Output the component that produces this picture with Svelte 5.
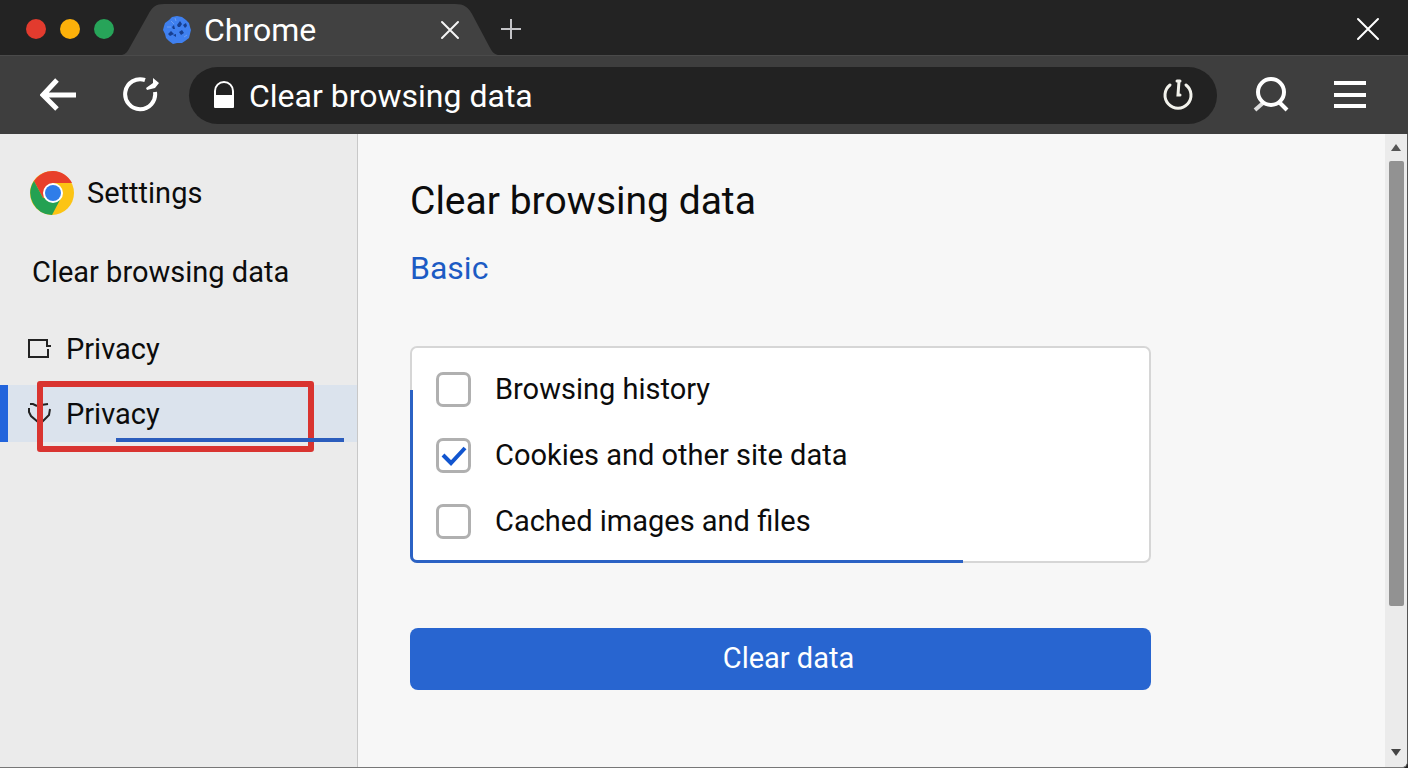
<script>
let address = "Clear browsing data";
let active = "permissions";

let navItems = [
  { id: "privacy", label: "Privacy", icon: "box" },
  { id: "permissions", label: "Privacy", icon: "shield" }
];

let options = [
  { id: "history", label: "Browsing history", checked: false },
  { id: "cookies", label: "Cookies and other site data", checked: true },
  { id: "cache", label: "Cached images and files", checked: false }
];

function clearData() {
  options = options.map(option => ({ ...option, checked: false }));
}
</script>

<div class="browser">
  <header class="titlebar">
    <div class="lights">
      <span class="light red"></span>
      <span class="light yellow"></span>
      <span class="light green"></span>
    </div>
    <div class="tab">
      <svg class="tab-shape" viewBox="0 0 376 52" preserveAspectRatio="none" aria-hidden="true">
        <path d="M0 52 C4 51 6 48 8 44 L26 12 C30 4 34 1 42 1 H333 C342 1 346 4 350 11 L367 43 C370 49 372 51 376 52 Z" fill="#414141" />
      </svg>
      <svg class="favicon" width="30" height="30" viewBox="0 0 30 30" aria-hidden="true">
        <path d="M10 2 L15 1 L20 2 L24 5 L27 8 L28 12 L29 15 L28 19 L27 23 L23 26 L20 28 L15 28 L11 29 L7 26 L4 23 L3 19 L1 15 L2 11 L3 8 L7 5 Z" fill="#3f80f0" />
        <g fill="#173f91">
          <path d="M15 10 L18 6 L20 9 L18 12 L16 12 Z M21 10 L24 8 L25 11 L23 13 Z M10 12 L12 10 L13 14 L11 14 Z" />
          <path d="M6 19 L9 16 L12 19 L8 21 Z M17 17 L20 15 L22 18 L19 20 Z M11 20 L14 19 L14 22 Z" />
        </g>
        <path d="M9 6 L12 9 M5 12 L9 12 M22 22 L25 20 M13 3 L14 6" stroke="#6c9df2" stroke-width="1" />
      </svg>
      <span class="tab-title">Chrome</span>
      <button class="icon-button" aria-label="Close tab">
        <svg width="20" height="20" viewBox="0 0 20 20"><path d="M2 2 L18 18 M18 2 L2 18" stroke="#f4f4f4" stroke-width="2" stroke-linecap="round" /></svg>
      </button>
    </div>
    <button class="icon-button" aria-label="New tab">
      <svg width="20" height="20" viewBox="0 0 20 20"><path d="M10 0 V20 M0 10 H20" stroke="#c4c4c8" stroke-width="2" /></svg>
    </button>
    <button class="icon-button close-window" aria-label="Close window">
      <svg width="24" height="24" viewBox="0 0 24 24"><path d="M2 2 L22 22 M22 2 L2 22" stroke="#fff" stroke-width="2" stroke-linecap="round" /></svg>
    </button>
  </header>

  <div class="toolbar">
    <button class="icon-button" aria-label="Back">
      <svg width="36" height="36" viewBox="0 0 36 36" fill="none" stroke="#fff" stroke-width="5"><path d="M3 18 H36 M17 3 L3 18 L17 32" /></svg>
    </button>
    <button class="icon-button reload" aria-label="Reload">
      <svg width="36" height="36" viewBox="0 0 36 36">
        <path d="M22 3 A15 15 0 1 0 32 15" fill="none" stroke="#fff" stroke-width="4" />
        <path d="M30 1 L36 6 L32 11 L24 13 L23 11 L30 6 Z" fill="#fff" />
      </svg>
    </button>
    <div class="address">
      <svg width="22" height="30" viewBox="0 0 22 30" aria-hidden="true">
        <path d="M2 16 V11 A9 9 0 0 1 20 11 V16" fill="none" stroke="#fff" stroke-width="2" />
        <rect x="1" y="15" width="20" height="13" rx="1" fill="#fff" />
      </svg>
      <input type="text" aria-label="Address" bind:value={address}>
      <button class="icon-button" aria-label="Page activity">
        <svg width="30" height="32" viewBox="0 0 30 32" fill="none" stroke="#f2f2ec" stroke-width="3" stroke-linecap="round">
          <path d="M7 6 A13 13 0 1 0 23 6" />
          <path d="M14 2 H17 M16 2 L15 16 H17" />
        </svg>
      </button>
    </div>
    <button class="icon-button search" aria-label="Search">
      <svg width="36" height="36" viewBox="0 0 36 36" fill="none" stroke="#fff" stroke-width="4">
        <path d="M10 26 L2 33" stroke="#ddd" />
        <path d="M26 25 L34 33" />
        <circle cx="18" cy="15" r="13" />
      </svg>
    </button>
    <button class="icon-button" aria-label="Menu">
      <svg width="34" height="30" viewBox="0 0 34 30"><path d="M1 3 H33 M1 15 H33 M1 26 H33" stroke="#fff" stroke-width="4" /></svg>
    </button>
  </div>

  <div class="page">
    <aside class="sidebar">
      <div class="brand">
        <svg width="46" height="46" viewBox="0 0 46 46" aria-hidden="true">
          <circle cx="23" cy="23" r="22" fill="#fcc414" />
          <path d="M23 13 H43 A22 22 0 0 0 5 11 L14 28 L23 23 Z" fill="#e8402a" />
          <path d="M5 11 A22 22 0 0 0 23 45 L32 28 L14 28 Z" fill="#24a152" />
          <circle cx="24" cy="23" r="10" fill="#fff" />
          <circle cx="24" cy="23" r="8" fill="#2f7de9" />
        </svg>
        <span>Setttings</span>
      </div>
      <p class="section">Clear browsing data</p>
      <nav>
        {#each navItems as item (item.id)}
          <a href="#{item.id}" class:active={item.id === active} on:click|preventDefault={() => active = item.id}>
            <svg width="24" height="24" viewBox="0 0 24 24" fill="none" stroke="#222" stroke-width="2" aria-hidden="true">
              {#if item.icon === "box"}
                <path d="M19 8 V3 H1 V20 H20 V12 M18 9 H23" />
              {:else}
                <path d="M2 2 L5 2 L9 4 M13 3 L20 2 M1 6 V10 L3 14 L10 20 M22 7 L21 13 L14 20" />
              {/if}
            </svg>
            <span>{item.label}</span>
          </a>
        {/each}
      </nav>
    </aside>

    <main>
      <h1>Clear browsing data</h1>
      <a class="basic" href="#basic">Basic</a>
      <div class="card">
        {#each options as option (option.id)}
          <label class="option" for={option.id}>
            <span class="box">
              <input type="checkbox" id={option.id} bind:checked={option.checked}>
              {#if option.checked}
                <svg class="tick" viewBox="0 0 35 35" aria-hidden="true"><path d="M7 17 L15 25 L29 10" fill="none" stroke="#1155cf" stroke-width="4" /></svg>
              {/if}
            </span>
            <span>{option.label}</span>
          </label>
        {/each}
      </div>
      <button class="clear" on:click={clearData}>Clear data</button>
    </main>

    <div class="scrollbar" aria-hidden="true">
      <svg width="12" height="8" viewBox="0 0 12 8"><path d="M1 8 L6 1 L11 8 Z" fill="#555" /></svg>
      <div class="track"><div class="thumb"></div></div>
      <svg width="12" height="8" viewBox="0 0 12 8"><path d="M1 0 L6 7 L11 0 Z" fill="#444" /></svg>
    </div>
  </div>
</div>

<style>
:global(body) {
  margin: 0;
  background: #232323;
}

.browser {
  display: flex;
  flex-direction: column;
  min-height: 100vh;
  font-family: Roboto, "Liberation Sans", sans-serif;
  font-size: 29px;
  line-height: 40px;
  color: #0c0c0c;
}

.browser svg {
  display: block;
  flex: none;
}

.icon-button {
  padding: 0;
  border: none;
  background: none;
  cursor: pointer;
}

/* window title bar */

.titlebar {
  display: flex;
  align-items: center;
  height: 55px;
  padding: 2px 28px 0 26px;
  box-sizing: border-box;
  background: #232323;
}

.lights {
  display: flex;
  gap: 14px;
  margin-right: 8px;
}

.light {
  width: 20px;
  height: 20px;
  border-radius: 50%;
}

.red { background: #e23b2e; }
.yellow { background: #fdb10a; }
.green { background: #27a459; }

.tab {
  position: relative;
  display: flex;
  align-items: center;
  align-self: flex-end;
  box-sizing: border-box;
  width: 376px;
  height: 52px;
  margin-right: 3px;
  padding: 2px 38px 0 40px;
  color: #fff;
  font-size: 32px;
}

.tab-shape {
  position: absolute;
  inset: 0;
  width: 100%;
  height: 100%;
}

.favicon,
.tab-title,
.tab .icon-button {
  position: relative;
}

.tab-title {
  flex: 1;
  padding-left: 12px;
}

.close-window {
  margin-left: auto;
}

/* toolbar */

.toolbar {
  display: flex;
  align-items: center;
  box-sizing: border-box;
  height: 79px;
  padding: 0 41px 0 40px;
  border-top: 1px solid #4a4a4a;
  background: #3e3e3e;
}

.reload {
  margin: 0 30px 0 47px;
}

.search {
  margin: 0 44px 0 36px;
}

.address {
  display: flex;
  flex: 1;
  align-items: center;
  gap: 14px;
  box-sizing: border-box;
  height: 57px;
  padding: 0 24px;
  border-radius: 29px;
  background: #222;
}

.address input {
  flex: 1;
  min-width: 0;
  height: 40px;
  padding: 2px 0 0;
  border: none;
  outline: none;
  background: none;
  color: #fff;
  font-family: inherit;
  font-size: 32px;
}

/* page */

.page {
  display: flex;
  flex: 1;
  background: #f7f7f7;
  border-right: 1px solid #555;
  border-bottom: 1px solid #777;
  border-bottom-right-radius: 6px;
}

.sidebar {
  flex: none;
  box-sizing: border-box;
  width: 358px;
  padding-top: 36px;
  border-right: 1px solid #c8c8c8;
  background: #ebebeb;
}

.brand {
  display: flex;
  align-items: center;
  gap: 12px;
  padding-left: 29px;
}

.section {
  margin: 36px 0 28px;
  padding-left: 32px;
}

nav {
  display: flex;
  flex-direction: column;
  gap: 8px;
}

nav a {
  position: relative;
  display: flex;
  align-items: center;
  gap: 14px;
  height: 57px;
  padding-left: 20px;
  border-left: 8px solid transparent;
  color: inherit;
  text-decoration: none;
}

nav a.active {
  border-left-color: #2264dc;
  background: #dbe3ed;
}

/* red frame and underline around the current entry */

nav a.active::before {
  content: "";
  position: absolute;
  top: -4px;
  bottom: -10px;
  left: 29px;
  right: 43px;
  border: 6px solid #d93430;
  border-radius: 3px;
}

nav a.active::after {
  content: "";
  position: absolute;
  bottom: 0;
  left: 108px;
  right: 13px;
  height: 4px;
  background: #2b5dbd;
}

main {
  flex: 1;
  padding: 43px 52px 40px;
}

h1 {
  margin: 0 0 23px;
  font-size: 39px;
  font-weight: 400;
  line-height: 48px;
}

.basic {
  display: block;
  width: fit-content;
  color: #1c5bc4;
  font-size: 32px;
  text-decoration: none;
}

.card,
.clear {
  box-sizing: border-box;
  width: 100%;
  max-width: 741px;
}

.card {
  position: relative;
  margin: 58px 0 65px;
  padding: 8px 24px 7px;
  border: 2px solid #d6d6d6;
  border-radius: 7px;
  background: #fff;
}

.card::after {
  content: "";
  position: absolute;
  left: -2px;
  bottom: -2px;
  width: 75%;
  height: 81%;
  box-sizing: border-box;
  border: solid #2b62c4;
  border-width: 0 0 3px 3px;
  border-bottom-left-radius: 7px;
  pointer-events: none;
}

.option {
  display: flex;
  align-items: center;
  gap: 24px;
  height: 66px;
}

.box {
  position: relative;
  width: 35px;
  height: 35px;
}

.box input {
  appearance: none;
  display: block;
  box-sizing: border-box;
  width: 35px;
  height: 35px;
  margin: 0;
  border: 3px solid #b0b0b0;
  border-radius: 7px;
  background: #fff;
}

.tick {
  position: absolute;
  inset: 0;
  pointer-events: none;
}

.clear {
  display: block;
  height: 62px;
  padding: 0 0 2px 16px;
  border: none;
  border-radius: 8px;
  background: #2865d0;
  color: #fff;
  font-family: inherit;
  font-size: 29px;
  cursor: pointer;
}

/* scrollbar */

.scrollbar {
  display: flex;
  flex: none;
  flex-direction: column;
  align-items: center;
  gap: 10px;
  box-sizing: border-box;
  width: 22px;
  padding: 9px 0 10px;
  background: #ebebeb;
  border-bottom-right-radius: 6px;
}

.track {
  flex: 1;
  width: 15px;
}

.thumb {
  height: 77%;
  border-radius: 2px;
  background: #929292;
}
</style>
